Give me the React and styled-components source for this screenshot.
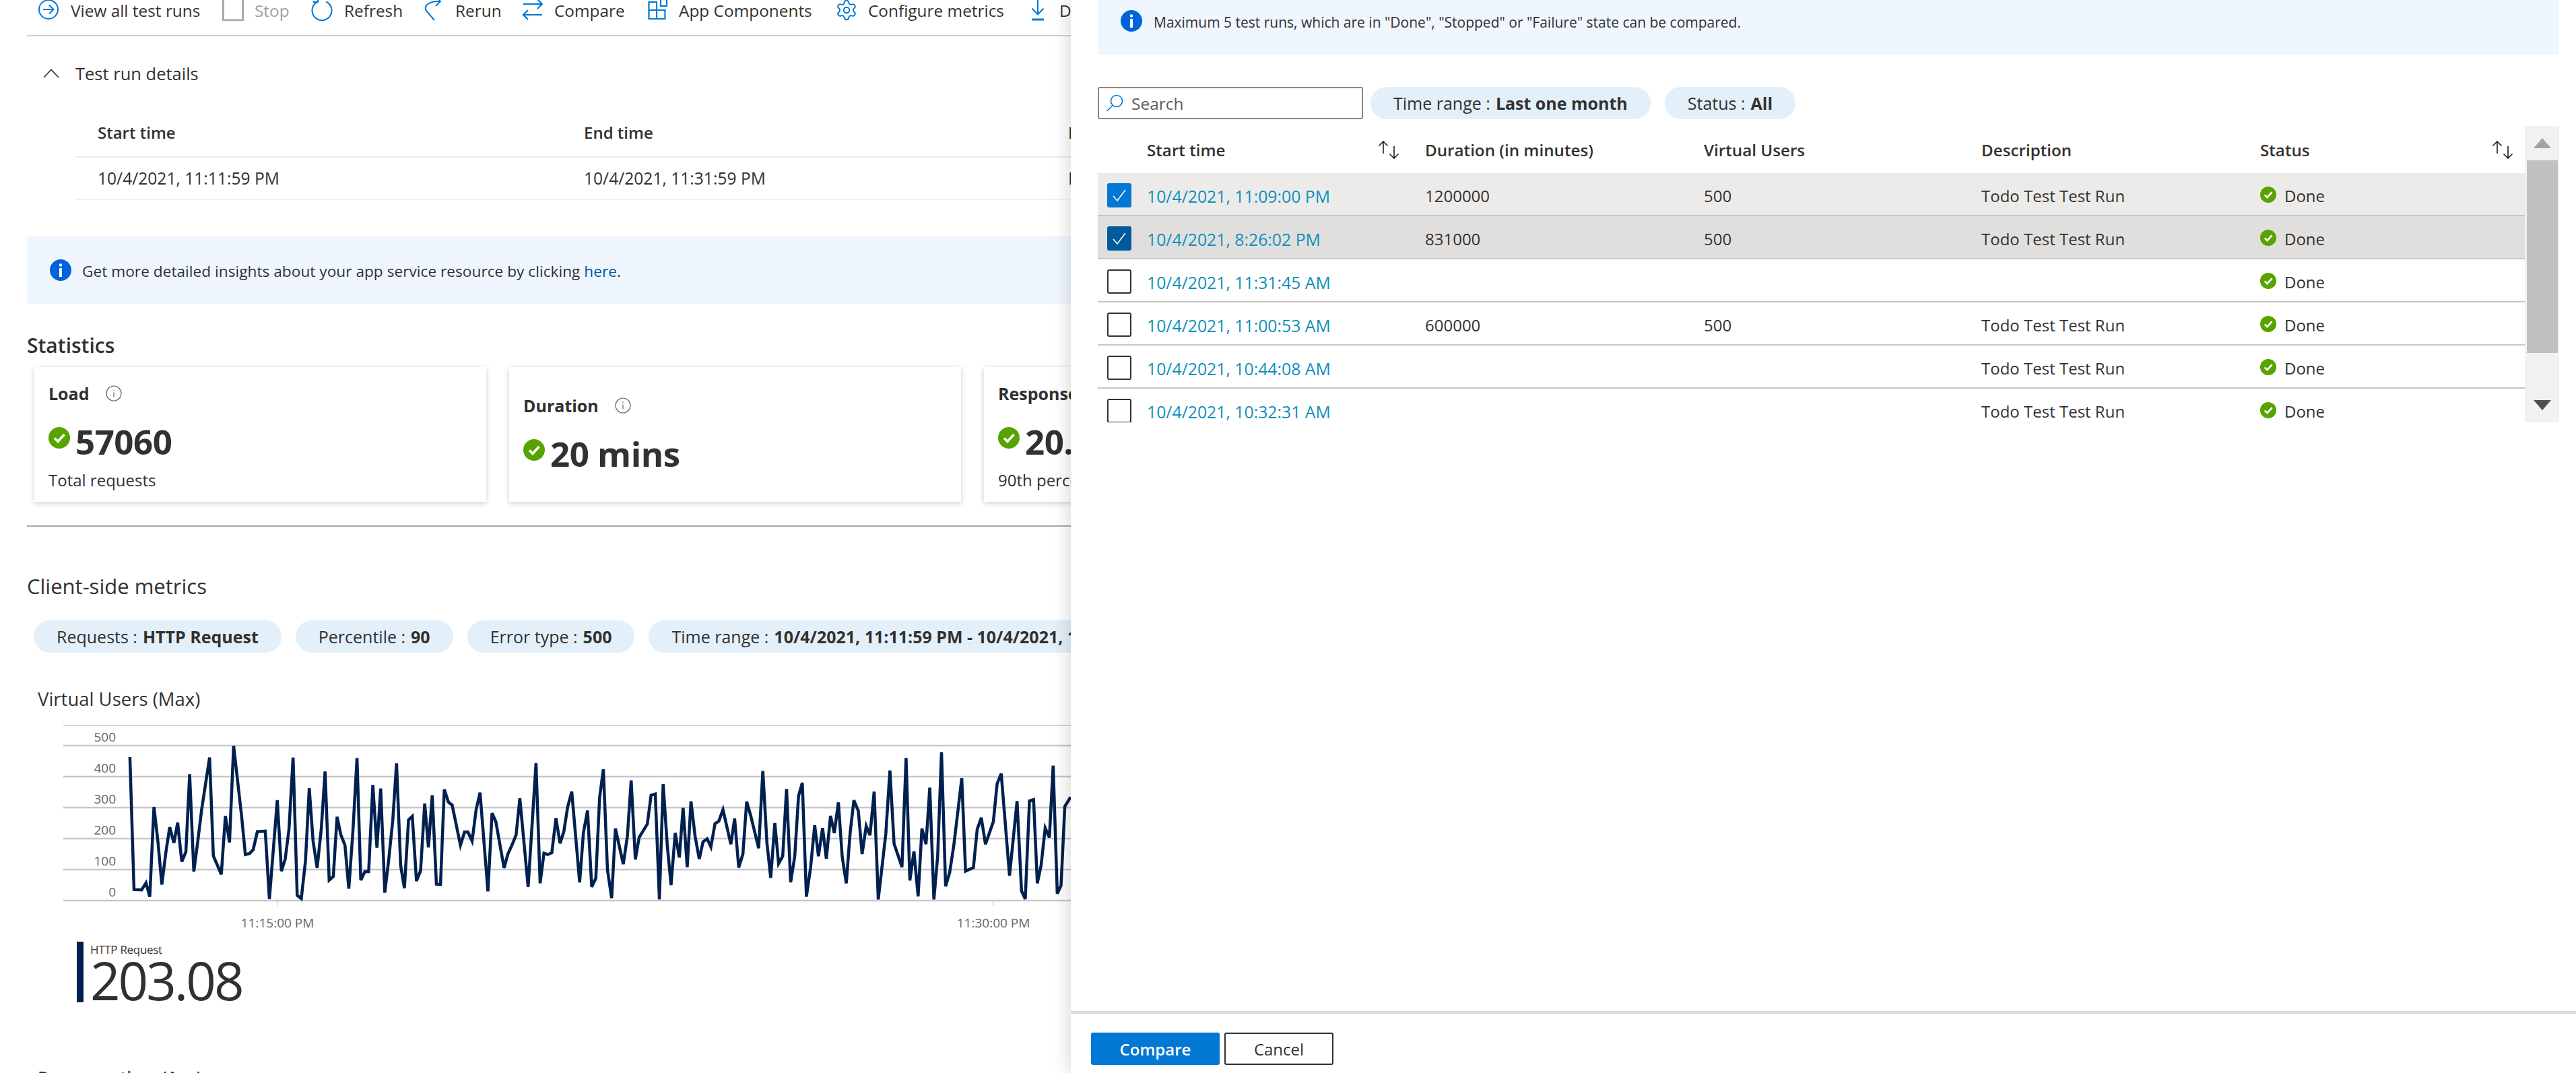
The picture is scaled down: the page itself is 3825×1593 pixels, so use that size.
import styled, { createGlobalStyle } from "styled-components";
import { Settings } from "lucide-react";

const GlobalStyle = createGlobalStyle`
  html, body {
    margin: 0;
    padding: 0;
    background: #fff;
  }
  body {
    font-family: "Open Sans", "Liberation Sans", sans-serif;
    color: #323130;
  }
`;

const Page = styled.div`
  width: 3825px;
  height: 1593px;
  display: flex;
  overflow: hidden;
  background: #fff;
`;

const Main = styled.main`
  flex: 0 0 1590px;
  height: 1593px;
  overflow: hidden;
  padding-left: 40px;
  box-sizing: border-box;
`;

const Toolbar = styled.div`
  width: 1800px;
  height: 54px;
  box-sizing: border-box;
  padding: 0 0 22px 17px;
  display: flex;
  align-items: center;
  border-bottom: 2px solid #d2d0ce;
`;

const ToolItem = styled.div`
  flex: 0 0 ${(p) => p.$w}px;
  display: flex;
  align-items: center;
  font-size: 24.4px;
  white-space: nowrap;
  color: ${(p) => (p.$disabled ? "#a19f9d" : "#323130")};
`;

const ToolIcon = styled.span`
  flex: 0 0 ${(p) => p.$w}px;
  height: 32px;
  display: flex;
  align-items: center;
  svg {
    display: block;
  }
`;

const DetailsHeader = styled.div`
  margin-top: 38px;
  padding-left: 24px;
  height: 34px;
  display: flex;
  align-items: center;
  gap: 24px;
  font-size: 25.5px;
`;

const DetailsTable = styled.div`
  margin: 37px 0 0 72px;
  width: 1800px;
`;

const DetailsRow = styled.div`
  display: grid;
  grid-template-columns: 722px 719px 300px;
  height: ${(p) => p.$h}px;
  box-sizing: border-box;
  padding-left: 33px;
  padding-bottom: ${(p) => (p.$head ? 2 : 0)}px;
  align-items: center;
  font-size: ${(p) => (p.$head ? 24 : 24.6)}px;
  font-weight: ${(p) => (p.$head ? 600 : 400)};
  border-bottom: 2px solid ${(p) => (p.$head ? "#edebe9" : "#f3f2f1")};
`;

const InfoBanner = styled.div`
  margin-top: ${(p) => p.$top}px;
  height: ${(p) => p.$h}px;
  box-sizing: border-box;
  padding: 0 0 ${(p) => p.$bottom}px ${(p) => p.$left}px;
  display: flex;
  align-items: center;
  gap: ${(p) => p.$gap}px;
  background: #eff6fe;
  border-radius: 2px;
  font-size: ${(p) => p.$size}px;
  white-space: nowrap;
`;

const BannerText = styled.span`
  padding-top: 3px;
`;

const BannerLink = styled.span`
  color: #005a9e;
`;

const SectionTitle = styled.h2`
  margin: ${(p) => p.$top}px 0 0;
  height: 40px;
  line-height: 40px;
  font-size: ${(p) => p.$size || 30}px;
  font-weight: ${(p) => p.$weight || 400};
`;

const Cards = styled.div`
  margin: 12px 0 0 11px;
  display: flex;
  gap: 34px;
  width: 2000px;
`;

const Card = styled.section`
  flex: 0 0 671px;
  height: 200px;
  box-sizing: border-box;
  padding: 0 21px;
  display: flex;
  flex-direction: column;
  justify-content: center;
  background: #fff;
  box-shadow: 0 2px 8px rgba(0, 0, 0, 0.2);
`;

const CardTitle = styled.div`
  display: flex;
  align-items: center;
  gap: 24px;
  height: 34px;
  font-size: 25px;
  font-weight: 700;
`;

const CardValue = styled.div`
  margin-top: 22px;
  display: flex;
  align-items: center;
  gap: 8px;
  height: 64px;
  font-size: 51px;
  font-weight: 700;
  line-height: 64px;
  letter-spacing: -0.5px;
`;

const CheckWrap = styled.span`
  display: flex;
  margin-top: ${(p) => p.$shift || 0}px;
`;

const CardNote = styled.div`
  margin-top: 16px;
  height: 20px;
  line-height: 20px;
  font-size: 24px;
`;

const Divider = styled.div`
  margin-top: 35px;
  height: 2px;
  width: 1800px;
  background: #a8a8a8;
`;

const Pills = styled.div`
  display: flex;
  gap: 21px;
  margin: ${(p) => p.$margin || 0};
  white-space: nowrap;
`;

const Pill = styled.div`
  flex: 0 0 auto;
  height: 48px;
  box-sizing: border-box;
  padding: 0 34px;
  display: flex;
  align-items: center;
  gap: 8px;
  background: #e3f0fa;
  border-radius: 24px;
  font-size: 25px;
  b {
    font-weight: 700;
  }
`;

const ChartTitle = styled.div`
  margin: 51px 0 0 16px;
  height: 36px;
  line-height: 36px;
  font-size: 27.5px;
`;

const ChartSvg = styled.svg`
  display: block;
  margin-top: 12px;
  text {
    font-family: "Open Sans", "Liberation Sans", sans-serif;
    font-size: 19px;
    fill: #666;
  }
`;

const Legend = styled.div`
  margin: 0 0 0 74px;
  height: 90px;
  padding-left: 10px;
  border-left: 10px solid #002050;
  display: flex;
  flex-direction: column;
`;

const LegendName = styled.div`
  font-size: 17px;
  line-height: 24px;
  height: 31px;
  letter-spacing: -0.3px;
`;

const LegendValue = styled.div`
  font-size: 78px;
  font-weight: 500;
  line-height: 66px;
  letter-spacing: -3px;
`;

const NextTitle = styled.div`
  margin: 94px 0 0 16px;
  font-size: 25px;
  font-weight: 600;
  line-height: 34px;
`;

/* compare panel */
const Panel = styled.aside`
  flex: 1;
  height: 1593px;
  position: relative;
  display: flex;
  flex-direction: column;
  background: #fff;
  box-shadow: -2px 0 26px rgba(0, 0, 0, 0.16);
`;

const PanelBody = styled.div`
  flex: 1;
  padding: 0 25px 0 40px;
`;

const Controls = styled.div`
  margin-top: 48px;
  display: flex;
  gap: 11px;
`;

const SearchBox = styled.div`
  flex: 0 0 394px;
  height: 48px;
  box-sizing: border-box;
  padding-left: 10px;
  display: flex;
  align-items: center;
  gap: 12px;
  border: 2px solid #8a8886;
  border-radius: 3px;
  color: #605e5c;
  font-size: 24.500px;
`;

const TableArea = styled.div`
  margin-top: 10px;
  height: 440px;
  display: flex;
  overflow: hidden;
`;

const TableInner = styled.div`
  flex: 0 0 2119px;
`;

const RunRow = styled.div`
  display: grid;
  grid-template-columns: 73px 413px 414px 412px 414px 393px;
  align-items: center;
  height: ${(p) => p.$h || 64}px;
  box-sizing: border-box;
  padding-top: ${(p) => (p.$head ? 0 : 5)}px;
  font-size: ${(p) => (p.$head ? 24.2 : 24)}px;
  font-weight: ${(p) => (p.$head ? 600 : 400)};
  background: ${(p) => p.$bg || "#fff"};
  border-bottom: ${(p) => (p.$head ? "none" : "2px solid #c8c6c4")};
`;

const SortCell = styled.div`
  display: flex;
  align-items: center;
  justify-content: space-between;
  padding-right: ${(p) => p.$right}px;
`;

const CheckBox = styled.span`
  margin: -2px 0 0 14px;
  width: 36px;
  height: 36px;
  box-sizing: border-box;
  display: flex;
  align-items: center;
  justify-content: center;
  border-radius: 3px;
  background: ${(p) => p.$color || "#fff"};
  border: ${(p) => (p.$color ? "none" : "2px solid #323130")};
`;

const RunLink = styled.span`
  color: #0f8fbb;
  font-size: 24.800px;
`;

const StatusCell = styled.div`
  display: flex;
  align-items: center;
  gap: 12px;
`;

const StatusIcon = styled.span`
  display: flex;
  margin-top: -3px;
`;

const Scrollbar = styled.div`
  flex: 0 0 51px;
  display: flex;
  flex-direction: column;
  align-items: center;
  background: #f1f1f1;
`;

const ScrollArrow = styled.div`
  flex: 0 0 ${(p) => p.$h}px;
  display: flex;
  align-items: center;
  justify-content: center;
  width: 100%;
`;

const ScrollThumb = styled.div`
  flex: 0 0 286px;
  width: 46px;
  background: #c1c1c1;
`;

const ScrollGap = styled.div`
  flex: 1;
`;

const PanelFooter = styled.footer`
  flex: 0 0 92px;
  box-sizing: border-box;
  padding: 28px 0 0 30px;
  display: flex;
  gap: 7px;
  border-top: 4px solid #d9d9d9;
`;

const Button = styled.button`
  width: ${(p) => p.$w}px;
  height: 48px;
  padding: 0;
  border-radius: 3px;
  box-sizing: border-box;
  font-family: inherit;
  font-size: 24px;
  font-weight: ${(p) => (p.$primary ? 600 : 400)};
  color: ${(p) => (p.$primary ? "#fff" : "#323130")};
  background: ${(p) => (p.$primary ? "#0078d4" : "#fff")};
  border: ${(p) => (p.$primary ? "none" : "2px solid #323130")};
`;

const BLUE = "#0078d4";

const InfoFilled = () => (
  <svg width="32" height="32" viewBox="0 0 32 32">
    <circle cx="16" cy="16" r="16" fill="#0063d9" />
    <circle cx="16" cy="8.500" r="2.300" fill="#fff" />
    <rect x="14" y="13" width="4" height="13" fill="#fff" />
  </svg>
);

const InfoOutline = () => (
  <svg width="24" height="24" viewBox="0 0 24 24" fill="none" stroke="#666" strokeWidth="1.200">
    <circle cx="12" cy="12" r="11" />
    <path d="M12 10.500v7M12 6.500v1.600" />
  </svg>
);

const CheckCircle = ({ size = 32 }) => (
  <svg width={size} height={size} viewBox="0 0 32 32">
    <circle cx="16" cy="16" r="16" fill="#57a300" />
    <path d="M9 16.500l5 5 9.500-10.500" fill="none" stroke="#fff" strokeWidth="3.600" />
  </svg>
);

const SortIcon = () => (
  <svg width="32" height="27" viewBox="0 0 32 27" fill="none" stroke="#201f1e" strokeWidth="1.600">
    <path d="M8 19V1M1.500 7.500L8 1l6.500 6.500" />
    <path d="M24 8v18M17.500 19.500L24 26l6.500-6.500" />
  </svg>
);

const Tick = () => (
  <svg width="22" height="22" viewBox="0 0 22 22" fill="none" stroke="#fff" strokeWidth="1.600">
    <path d="M2 12l6 7L20 3" />
  </svg>
);

const toolIcons = {
  view: (
    <svg width="30" height="32" viewBox="0 0 30 32" fill="none" stroke={BLUE} strokeWidth="2">
      <circle cx="15" cy="15" r="14" />
      <path d="M7 15h15M16 8.500l6.500 6.500-6.500 6.500" />
    </svg>
  ),
  stop: (
    <svg width="32" height="32" viewBox="0 0 32 32" fill="none" stroke="#a8a8a8" strokeWidth="3">
      <rect x="1.500" y="-1" width="29" height="32" />
    </svg>
  ),
  refresh: (
    <svg width="32" height="32" viewBox="0 0 32 32" fill="none" stroke={BLUE} strokeWidth="2">
      <path d="M10 3.500A14.500 14.500 0 1 0 22 3.500" />
      <path d="M10 -3v7H2.500" />
    </svg>
  ),
  rerun: (
    <svg width="26" height="32" viewBox="0 0 26 32" fill="none" stroke={BLUE} strokeWidth="2">
      <path d="M15 31L3 17C-1 10 6 2 24 3" />
      <path d="M17 -4l7 7-7 7" />
    </svg>
  ),
  compare: (
    <svg width="32" height="32" viewBox="0 0 32 32" fill="none" stroke={BLUE} strokeWidth="2.200">
      <path d="M2 7h28M23 0l7 7-7 7" />
      <path d="M30 23H2M9 16l-7 7 7 7" />
    </svg>
  ),
  app: (
    <svg width="30" height="32" viewBox="0 0 30 32" fill="none" stroke={BLUE} strokeWidth="2.200">
      <path d="M1.500 4h11.500v25H1.500zM13 16h12.500v13H13zM1.500 16H13" />
      <rect x="19" y="0" width="9" height="10" />
    </svg>
  ),
  gear: <Settings size={34} color={BLUE} strokeWidth={1.400} />,
  download: (
    <svg width="20" height="32" viewBox="0 0 20 32" fill="none" stroke={BLUE} strokeWidth="2">
      <path d="M10 -2v24M1.500 13.500L10 22.500l8.500-9" />
      <path d="M1 30h18" strokeWidth="3" />
    </svg>
  ),
};

const tools = [
  { key: "view", label: "View all test runs", w: 273, icon: 48 },
  { key: "stop", label: "Stop", w: 132, icon: 48, disabled: true },
  { key: "refresh", label: "Refresh", w: 168, icon: 49 },
  { key: "rerun", label: "Rerun", w: 145, icon: 46 },
  { key: "compare", label: "Compare", w: 187, icon: 48 },
  { key: "app", label: "App Components", w: 278, icon: 46 },
  { key: "gear", label: "Configure metrics", w: 291, icon: 49 },
  { key: "download", label: "Download", w: 300, icon: 42 },
];

const runs = [
  { start: "10/4/2021, 11:09:00 PM", dur: "1200000", vu: "500", desc: "Todo Test Test Run", box: "#0078d4", bg: "#edebe9" },
  { start: "10/4/2021, 8:26:02 PM", dur: "831000", vu: "500", desc: "Todo Test Test Run", box: "#005a9e", bg: "#e1dfdd" },
  { start: "10/4/2021, 11:31:45 AM" },
  { start: "10/4/2021, 11:00:53 AM", dur: "600000", vu: "500", desc: "Todo Test Test Run" },
  { start: "10/4/2021, 10:44:08 AM", desc: "Todo Test Test Run" },
  { start: "10/4/2021, 10:32:31 AM", desc: "Todo Test Test Run" },
];

// traced from the chart crops, x at 1.96x, y at 3x
const seriesA = [378,258,390,848,412,850,425,818,436,880,448,480,460,640,471,826,483,680,494,570,506,640,517,550,529,724,541,680,552,334,564,768,575,640,587,490,610,260,621,698,644,780,656,520,668,638,680,208,703,520,714,692,726,688,737,670,749,590,772,588,784,890,807,450,819,766,830,712,841,580,853,260,865,874,877,888,889,720,900,396,911,630,923,752,935,580,946,322,958,806,970,790,981,524,992,604,1004,650,1015,844,1027,590,1039,262,1050,806,1062,768,1073,768,1085,382,1097,662,1108,398,1120,862,1131,720,1143,540,1154,286,1166,740,1177,842,1189,538,1200,522,1212,810,1224,764,1236,465,1247,660,1258,428,1270,824,1282,825,1293,402,1305,458,1316,472,1340,650,1352,592,1362,592,1374,632,1386,490,1397,416,1420,856,1432,508,1443,545,1467,752,1478,690,1490,650,1502,605,1513,442,1537,836,1560,285];
const seriesB = [4,820,15,686,26,692,38,684,50,530,62,642,73,590,84,480,96,412,119,816,130,595,142,496,154,836,166,798,177,440,188,312,200,760,212,886,223,576,246,735,258,610,269,362,281,714,292,616,316,556,327,428,339,422,351,892,362,378,374,650,385,828,397,596,409,705,420,484,432,748,443,455,455,610,467,712,478,635,490,622,501,658,513,554,524,544,536,492,559,646,570,532,582,750,594,690,605,456,617,520,640,664,652,320,664,640,675,796,687,552,698,732,710,700,721,400,733,816,745,700,756,432,767,372,779,880,791,750,803,562,814,700,826,574,837,710,849,520,860,596,872,460,883,700,895,820,906,600,917,450,930,498,941,690,953,565,964,606,976,412,988,892,1010,600,1022,318,1034,644,1057,748,1069,262,1080,808,1092,678,1104,878,1115,576,1127,646,1138,394,1150,892,1161,700,1172,236,1184,834,1196,770,1208,650,1219,510,1231,352,1242,766,1265,750,1276,580,1288,528,1300,646,1323,545,1334,376,1346,332,1358,560,1370,786,1381,620,1392,454,1405,854,1416,890,1428,453,1440,448,1451,820,1462,740,1474,574,1486,616,1497,296,1509,866,1520,830,1531,478,1548,436];

// svg origin is page (40, 1070), crops start at y 1040
function buildPoints() {
  const out = [];
  for (let i = 0; i < seriesA.length; i += 2) {
    out.push(`${(seriesA[i] / 1.96 - 40).toFixed(1)},${(seriesA[i + 1] / 3 - 30).toFixed(1)}`);
  }
  for (let i = 0; i < seriesB.length; i += 2) {
    out.push(`${(800 + seriesB[i] / 1.96 - 40).toFixed(1)},${(seriesB[i + 1] / 3 - 30).toFixed(1)}`);
  }
  return out.join(" ");
}

const gridLines = [
  { y: 39, label: "500" },
  { y: 85, label: "400" },
  { y: 131, label: "300" },
  { y: 177, label: "200" },
  { y: 223, label: "100" },
  { y: 269, label: "0" },
];

function VirtualUsersChart() {
  return (
    <ChartSvg width="1550" height="330" viewBox="0 0 1550 330">
      <line x1="54" x2="1550" y1="9" y2="9" stroke="#c8c8c8" strokeWidth="1.500" />
      {gridLines.map((g) => (
        <g key={g.label}>
          <line x1="54" x2="1550" y1={g.y} y2={g.y} stroke="#c8c8c8" strokeWidth="2.500" />
          <text x="132" y={g.y - 6} textAnchor="end">
            {g.label}
          </text>
        </g>
      ))}
      <line x1="372" x2="372" y1="269" y2="277" stroke="#c8c8c8" />
      <line x1="1435" x2="1435" y1="269" y2="277" stroke="#c8c8c8" />
      <text x="372" y="309" textAnchor="middle">
        11:15:00 PM
      </text>
      <text x="1435" y="309" textAnchor="middle">
        11:30:00 PM
      </text>
      <polyline points={buildPoints()} fill="none" stroke="#002050" strokeWidth="4.500" strokeLinejoin="miter" />
    </ChartSvg>
  );
}

export default function App() {
  return (
    <Page>
      <GlobalStyle />
      <Main>
        <Toolbar>
          {tools.map((t) => (
            <ToolItem key={t.key} $w={t.w} $disabled={t.disabled}>
              <ToolIcon $w={t.icon}>{toolIcons[t.key]}</ToolIcon>
              {t.label}
            </ToolItem>
          ))}
        </Toolbar>

        <DetailsHeader>
          <svg width="24" height="14" viewBox="0 0 24 14" fill="none" stroke="#323130" strokeWidth="1.700">
            <path d="M1 13L12 1.500 23 13" />
          </svg>
          Test run details
        </DetailsHeader>
        <DetailsTable>
          <DetailsRow $head $h={71}>
            <span>Start time</span>
            <span>End time</span>
            <span>Executed by</span>
          </DetailsRow>
          <DetailsRow $h={63}>
            <span>10/4/2021, 11:11:59 PM</span>
            <span>10/4/2021, 11:31:59 PM</span>
            <span>Executed</span>
          </DetailsRow>
        </DetailsTable>

        <InfoBanner $top={54} $h={100} $left={34} $gap={16} $bottom={0} $size={22.700}>
          <InfoFilled />
          <BannerText>
            Get more detailed insights about your app service resource by clicking <BannerLink>here</BannerLink>.
          </BannerText>
        </InfoBanner>

        <SectionTitle $top={42} $weight={600}>Statistics</SectionTitle>
        <Cards>
          <Card>
            <CardTitle>
              Load <InfoOutline />
            </CardTitle>
            <CardValue>
              <CheckWrap $shift={-10}>
                <CheckCircle />
              </CheckWrap>
              57060
            </CardValue>
            <CardNote>Total requests</CardNote>
          </Card>
          <Card>
            <CardTitle>
              Duration <InfoOutline />
            </CardTitle>
            <CardValue>
              <CheckWrap $shift={-10}>
                <CheckCircle />
              </CheckWrap>
              20 mins
            </CardValue>
          </Card>
          <Card>
            <CardTitle>Response time</CardTitle>
            <CardValue>
              <CheckWrap $shift={-10}>
                <CheckCircle />
              </CheckWrap>
              20.
            </CardValue>
            <CardNote>90th percentile</CardNote>
          </Card>
        </Cards>
        <Divider />

        <SectionTitle $top={68} $size={31}>Client-side metrics</SectionTitle>
        <Pills $margin="31px 0 0 10px">
          <Pill>
            <span>Requests :</span>
            <b>HTTP Request</b>
          </Pill>
          <Pill>
            <span>Percentile :</span>
            <b>90</b>
          </Pill>
          <Pill>
            <span>Error type :</span>
            <b>500</b>
          </Pill>
          <Pill>
            <span>Time range :</span>
            <b>10/4/2021, 11:11:59 PM - 10/4/2021, 11:31:59 PM</b>
          </Pill>
        </Pills>

        <ChartTitle>Virtual Users (Max)</ChartTitle>
        <VirtualUsersChart />
        <Legend>
          <LegendName>HTTP Request</LegendName>
          <LegendValue>203.08</LegendValue>
        </Legend>
        <NextTitle>Response time (Avg)</NextTitle>
      </Main>

      <Panel>
        <PanelBody>
          <InfoBanner $top={0} $h={81} $left={34} $gap={17} $bottom={19} $size={21}>
            <InfoFilled />
            <BannerText>Maximum 5 test runs, which are in "Done", "Stopped" or "Failure" state can be compared.</BannerText>
          </InfoBanner>
          <Controls>
            <SearchBox>
              <svg width="26" height="26" viewBox="0 0 26 26" fill="none" stroke={BLUE} strokeWidth="1.600">
                <circle cx="16" cy="10" r="8.500" />
                <path d="M10 16.500L1.500 25" />
              </svg>
              Search
            </SearchBox>
            <Pills>
              <Pill>
                <span>Time range :</span>
                <b>Last one month</b>
              </Pill>
              <Pill>
                <span>Status :</span>
                <b>All</b>
              </Pill>
            </Pills>
          </Controls>
          <TableArea>
            <TableInner>
              <RunRow $head $h={70}>
                <span />
                <SortCell $right={38}>
                  Start time <SortIcon />
                </SortCell>
                <span>Duration (in minutes)</span>
                <span>Virtual Users</span>
                <span>Description</span>
                <SortCell $right={17}>
                  Status <SortIcon />
                </SortCell>
              </RunRow>
              {runs.map((r) => (
                <RunRow key={r.start} $bg={r.bg}>
                  <CheckBox $color={r.box}>{r.box && <Tick />}</CheckBox>
                  <RunLink>{r.start}</RunLink>
                  <span>{r.dur}</span>
                  <span>{r.vu}</span>
                  <span>{r.desc}</span>
                  <StatusCell>
                    <StatusIcon>
                      <CheckCircle size={24} />
                    </StatusIcon>
                    Done
                  </StatusCell>
                </RunRow>
              ))}
            </TableInner>
            <Scrollbar>
              <ScrollArrow $h={51}>
                <svg width="26" height="15" viewBox="0 0 26 15">
                  <path d="M13 0L26 15H0z" fill="#a3a3a3" />
                </svg>
              </ScrollArrow>
              <ScrollThumb />
              <ScrollGap />
              <ScrollArrow $h={51}>
                <svg width="26" height="15" viewBox="0 0 26 15">
                  <path d="M0 0h26L13 15z" fill="#505050" />
                </svg>
              </ScrollArrow>
            </Scrollbar>
          </TableArea>
        </PanelBody>
        <PanelFooter>
          <Button $primary $w={191}>Compare</Button>
          <Button $w={162}>Cancel</Button>
        </PanelFooter>
      </Panel>
    </Page>
  );
}
